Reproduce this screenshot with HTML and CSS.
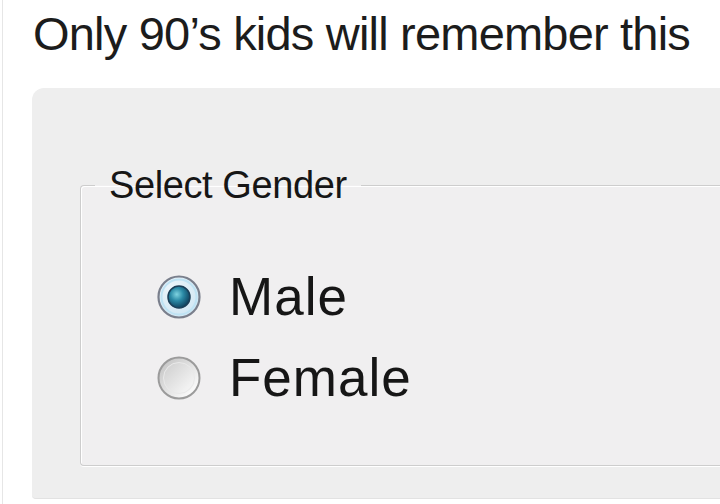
FILE: index.html
```html
<!DOCTYPE html>
<html lang="en">
<head>
<meta charset="utf-8">
<title>Only 90's kids will remember this</title>
<link rel="stylesheet" href="styles.css">
</head>
<body>
<div class="page">
  <h1 class="title">Only 90’s kids will remember this</h1>
  <div class="panel">
    <fieldset class="group">
      <legend class="group-legend">Select Gender</legend>
      <div class="options">
        <label class="option">
          <svg class="radio" width="44" height="44" viewBox="0 0 44 44" aria-hidden="true">
            <defs>
              <radialGradient id="dotOn" cx="40%" cy="38%" r="65%">
                <stop offset="0" stop-color="#7fd3e0"/>
                <stop offset="0.45" stop-color="#2b8aa6"/>
                <stop offset="1" stop-color="#0d3d5a"/>
              </radialGradient>
              <radialGradient id="faceOn" cx="35%" cy="30%" r="75%">
                <stop offset="0" stop-color="#eef6fb"/>
                <stop offset="1" stop-color="#cfe6f3"/>
              </radialGradient>
            </defs>
            <circle cx="22" cy="22" r="20.5" fill="url(#faceOn)" stroke="#7a7f8c" stroke-width="2.2"/>
            <circle cx="22" cy="22" r="17.5" fill="none" stroke="#bfe3f4" stroke-width="2"/>
            <circle cx="22" cy="22" r="11" fill="url(#dotOn)" stroke="#1b3f58" stroke-width="1.5"/>
          </svg>
          <span class="option-text">Male</span>
        </label>
        <label class="option">
          <svg class="radio" width="44" height="44" viewBox="0 0 44 44" aria-hidden="true">
            <defs>
              <linearGradient id="faceOff" x1="0.15" y1="0.15" x2="0.85" y2="0.85">
                <stop offset="0" stop-color="#c9c9c9"/>
                <stop offset="1" stop-color="#fbfbfb"/>
              </linearGradient>
              <linearGradient id="innerOff" x1="0.2" y1="0.2" x2="0.8" y2="0.8">
                <stop offset="0" stop-color="#d6d6d6"/>
                <stop offset="1" stop-color="#f2f2f2"/>
              </linearGradient>
            </defs>
            <circle cx="22" cy="22" r="20.5" fill="url(#faceOff)" stroke="#9b9b9b" stroke-width="2"/>
            <circle cx="22" cy="22" r="15.5" fill="url(#innerOff)" stroke="#e9e9e9" stroke-width="1"/>
          </svg>
          <span class="option-text">Female</span>
        </label>
      </div>
    </fieldset>
  </div>
</div>
</body>
</html>
```
FILE: styles.css
```css
html, body {
  margin: 0;
  padding: 0;
  background: #ffffff;
  overflow: hidden;
  height: 504px;
}

.page {
  margin-left: 2px;
  border-left: 1px solid #e6e6e6;
  height: 504px;
  font-family: "Liberation Sans", Arial, sans-serif;
  color: #1b1b1b;
}

.title {
  margin: 0;
  padding: 6px 0 0 30px;
  font-size: 47px;
  line-height: 56px;
  font-weight: normal;
  letter-spacing: -0.8px;
  color: #1c1c1c;
}

.panel {
  margin: 26px 0 0 29px;
  height: 333px;
  padding: 77px 0 0 48px;
  background: #eeeeee;
  border-radius: 12px 0 0 4px;
  border-bottom: 1px solid #e2e2e2;
}

.group {
  margin: 0;
  padding: 62px 0 0 0;
  height: 301px;
  box-sizing: border-box;
  background: #f0eff0;
  border: 1px solid #cdcdcd;
  border-right: none;
  border-radius: 4px 0 0 4px;
  box-shadow: inset 1px 1px 0 #ffffff, 0 1px 0 #ffffff;
}

.group-legend {
  margin-left: 14px;
  padding: 0 14px;
  font-size: 38px;
  line-height: 40px;
  letter-spacing: -0.4px;
  color: #161616;
}

.options {
  display: flex;
  flex-direction: column;
  gap: 21px;
  padding-left: 76px;
}

.option {
  display: flex;
  align-items: center;
  gap: 28px;
  height: 60px;
}

.radio {
  flex: none;
  display: block;
}

.option-text {
  font-size: 53px;
  line-height: 60px;
  letter-spacing: 1px;
  color: #161616;
}
```
